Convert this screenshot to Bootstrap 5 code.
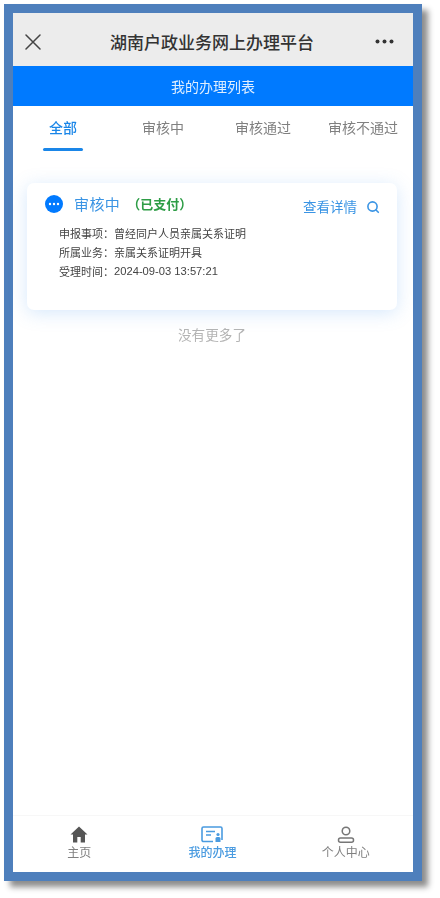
<!DOCTYPE html>
<html lang="zh-CN">
<head>
<meta charset="utf-8">
<title>我的办理列表</title>
<link href="https://cdn.jsdelivr.net/npm/bootstrap@5.3.0/dist/css/bootstrap.min.css" rel="stylesheet">
<style>
html,body{height:100%;background:#fff;}
body{padding:4px 0 0 4px;font-family:"Noto Sans CJK SC","Liberation Sans",sans-serif;overflow:hidden;}
.shot-frame{width:418px;height:877px;border:9px solid #4e7fbc;box-shadow:6px 6px 6px rgba(0,0,0,.45);background:#fff;}
.shot-inner{filter:blur(.45px);}
.top-bar{height:53px;background:#ececec;padding:4px 19px 0 12px;color:#333;}
.top-title{font-size:17px;font-weight:500;color:#333;line-height:1;margin:-1px 0 0 8px;}
.sub-bar{height:40px;background:#007aff;color:#dfeeff;font-size:14px;}
.tab-row{height:44px;}
.tab-cell{width:25%;font-size:14px;color:#808080;position:relative;padding-bottom:2px;line-height:1;}
.tab-cell.is-on{color:#1a86e8;font-weight:500;}
.tab-cell.is-on::after{content:"";position:absolute;left:50%;transform:translateX(-50%);bottom:-15px;width:40px;height:3px;border-radius:2px;background:#1a86e8;}
.list-area{padding:33px 16px 0 14px;}
.status-card{height:127px;border-radius:7px;border:0;box-shadow:0 3px 18px rgba(90,165,245,.25);padding:11px 17px 0 18px;}
.status-row{height:20px;}
.status-text{font-size:15px;color:#3a94e4;letter-spacing:.4px;line-height:20px;margin-left:3px;}
.pay-text{font-size:13px;font-weight:700;color:#2e9d46;line-height:20px;margin-left:7px;}
.detail-link{font-size:13.5px;color:#3a94e4;line-height:20px;margin:4px 1px 0 0;}
.find-icon{margin-top:6px;}
.info-lines{font-size:11px;color:#444;line-height:19px;padding-left:14px;margin-top:10px;}
.info-key{width:55px;flex:none;}
.info-date{font-family:"Liberation Sans",sans-serif;font-size:11.2px;}
.no-more{font-size:13.6px;color:#b4b4b4;line-height:20px;margin-top:14px;}
.bottom-bar{height:57px;border-top:1px solid #f7f7f7;padding-top:10px;}
.bottom-item{width:133.33px;font-size:12px;line-height:15px;color:#808080;margin-left:-.5px;margin-right:.5px;}
.bottom-item.is-on{color:#4a9be0;font-weight:500;}
.bottom-item svg{display:block;margin-bottom:1px;}
</style>
</head>
<body>
<div class="shot-frame d-flex flex-column">
  <div class="shot-inner d-flex flex-column flex-grow-1">
    <header class="top-bar d-flex align-items-center justify-content-between">
      <svg width="16" height="16" viewBox="0 0 16 16" fill="none" stroke="#444" stroke-width="1.5" stroke-linecap="round"><path d="M1 1L15 15M15 1L1 15"/></svg>
      <span class="top-title">湖南户政业务网上办理平台</span>
      <svg width="19" height="5" viewBox="0 0 19 5" fill="#333"><circle cx="2.5" cy="2.5" r="2"/><circle cx="9.5" cy="2.5" r="2"/><circle cx="16.500" cy="2.5" r="2"/></svg>
    </header>
    <div class="sub-bar d-flex align-items-center justify-content-center">我的办理列表</div>
    <nav class="tab-row d-flex align-items-center">
      <div class="tab-cell is-on text-center">全部</div>
      <div class="tab-cell text-center">审核中</div>
      <div class="tab-cell text-center">审核通过</div>
      <div class="tab-cell text-center">审核不通过</div>
    </nav>
    <main class="list-area flex-grow-1">
      <div class="card status-card">
        <div class="status-row d-flex align-items-center">
          <svg class="me-2" width="18" height="18" viewBox="0 0 18 18"><circle cx="9" cy="9" r="9" fill="#007aff"/><circle cx="5" cy="9" r="1.2" fill="#fff"/><circle cx="9" cy="9" r="1.2" fill="#fff"/><circle cx="13" cy="9" r="1.2" fill="#fff"/></svg>
          <span class="status-text">审核中</span>
          <span class="pay-text">（已支付）</span>
          <span class="detail-link ms-auto">查看详情</span>
          <svg class="find-icon ms-2" width="14" height="14" viewBox="0 0 14 14" fill="none" stroke="#3a94e4" stroke-width="1.6" stroke-linecap="round"><circle cx="6.5" cy="6.5" r="4.6"/><path d="M10 10l2.3 2.3"/></svg>
        </div>
        <div class="info-lines">
          <div class="d-flex"><span class="info-key">申报事项：</span><span>曾经同户人员亲属关系证明</span></div>
          <div class="d-flex"><span class="info-key">所属业务：</span><span>亲属关系证明开具</span></div>
          <div class="d-flex"><span class="info-key">受理时间：</span><span class="info-date">2024-09-03 13:57:21</span></div>
        </div>
      </div>
      <div class="no-more text-center">没有更多了</div>
    </main>
    <footer class="bottom-bar d-flex">
      <div class="bottom-item d-flex flex-column align-items-center">
        <svg width="18" height="17" viewBox="0 0 18 17" fill="#555"><path d="M9 .5L.5 8.500h2.500v8h4.300v-5.500h3.400v5.500H15v-8h2.500z"/></svg>
        <span>主页</span>
      </div>
      <div class="bottom-item is-on d-flex flex-column align-items-center">
        <svg width="22" height="17" viewBox="0 0 22 17" fill="none" stroke="#4a9be0" stroke-width="1.6"><path d="M12 15.500H2.500A1.500 1.500 0 0 1 1 14V2.500A1.500 1.500 0 0 1 2.500 1h17A1.500 1.500 0 0 1 21 2.500V14"/><path d="M5 5.500h9M5 9h5"/><circle cx="17" cy="8.500" r="1.600" fill="#4a9be0" stroke="none"/><path d="M14.500 16v-3.500a1.500 1.500 0 0 1 1.500-1.500h2a1.500 1.500 0 0 1 1.500 1.500V16z" fill="#4a9be0" stroke="none"/></svg>
        <span>我的办理</span>
      </div>
      <div class="bottom-item d-flex flex-column align-items-center">
        <svg width="18" height="17" viewBox="0 0 18 17" fill="none" stroke="#777" stroke-width="1.500"><circle cx="9" cy="5" r="3.800"/><rect x="1.500" y="12" width="15" height="4.200" rx="2"/></svg>
        <span>个人中心</span>
      </div>
    </footer>
  </div>
</div>
<script src="https://cdn.jsdelivr.net/npm/bootstrap@5.3.0/dist/js/bootstrap.bundle.min.js"></script>
</body>
</html>
